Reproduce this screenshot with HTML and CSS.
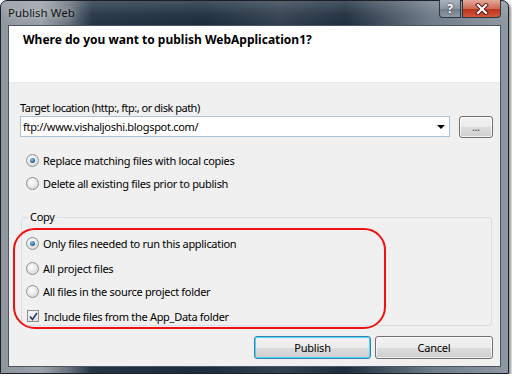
FILE: index.html
```html
<!DOCTYPE html>
<html lang="en">
<head>
    <meta charset="UTF-8">
    <meta name="viewport" content="width=device-width, initial-scale=1.0">
    <title>Publish Web</title>
    <link rel="stylesheet" href="styles.css">
</head>
<body>
    <div class="window">
        <div class="titlebar">
            <span class="title">Publish Web</span>
            <div class="caption-buttons">
                <span class="cap-btn help">?</span>
                <span class="cap-btn close">
                    <svg width="14" height="12" viewBox="0 0 14 12">
                        <path d="M3 2 L11 10 M11 2 L3 10" stroke="#5a1010" stroke-width="4" stroke-linecap="square"/>
                        <path d="M3 2 L11 10 M11 2 L3 10" stroke="#fff" stroke-width="2.2" stroke-linecap="square"/>
                    </svg>
                </span>
            </div>
        </div>
        <div class="client">
            <div class="header">
                <h1>Where do you want to publish WebApplication1?</h1>
            </div>
            <div class="content">
                <label class="field-label" for="location">Target location (http:, ftp:, or disk path)</label>
                <div class="location-row">
                    <div class="combo" id="location">
                        <span>ftp://www.vishaljoshi.blogspot.com/</span>
                        <span class="arrow"></span>
                    </div>
                    <button class="btn browse">...</button>
                </div>
                <div class="option first"><span class="radio checked"></span>Replace matching files with local copies</div>
                <div class="option second"><span class="radio"></span>Delete all existing files prior to publish</div>
                <fieldset class="group">
                    <legend>Copy</legend>
                    <div class="option g1"><span class="radio checked"></span>Only files needed to run this application</div>
                    <div class="option g2"><span class="radio"></span>All project files</div>
                    <div class="option g3"><span class="radio"></span>All files in the source project folder</div>
                    <div class="option g4">
                        <span class="checkbox">
                            <svg width="9" height="9" viewBox="0 0 9 9">
                                <path d="M1 4.5 L3.5 7.5 L8 1" fill="none" stroke="#1f3a66" stroke-width="1.6"/>
                            </svg>
                        </span>Include files from the App_Data folder
                    </div>
                </fieldset>
                <div class="actions">
                    <button class="btn primary">Publish</button>
                    <button class="btn cancel">Cancel</button>
                </div>
                <!-- red annotation drawn over the copy options -->
                <div class="highlight"></div>
            </div>
        </div>
    </div>
</body>
</html>
```

FILE: styles.css
```css
body {
    margin: 0;
    background-color: #fff;
    font-family: "Noto Sans", "Open Sans", sans-serif;
    font-size: 11px;
    letter-spacing: -0.3px;
    color: #000;
}
.window {
    width: 509px;
    height: 374px;
    box-sizing: border-box;
    padding: 0 7px 6px;
    display: flex;
    flex-direction: column;
    border: 1px solid #1b2028;
    border-radius: 7px 7px 0 0;
    background:
        linear-gradient(180deg, rgba(255,255,255,0.18) 0, rgba(255,255,255,0.04) 14px, rgba(0,0,0,0) 24px),
        linear-gradient(90deg, #8f969e 0, #9aa1a8 8%, #6d7681 13%, #243445 18%, #1c2c3d 40%, #32404f 55%, #1f2e3e 68%, #6e7b88 85%, #8e98a2 100%);
    box-shadow: 2px 2px 3px rgba(0, 0, 0, 0.45);
}
.titlebar {
    height: 24px;
    display: flex;
    justify-content: space-between;
    align-items: flex-start;
}
.title {
    margin-top: 4px;
    font-size: 11.5px;
    letter-spacing: 0;
    color: #111;
    text-shadow: 0 0 6px rgba(255, 255, 255, 0.7);
}
.caption-buttons {
    display: flex;
    gap: 1px;
    margin-top: -1px;
}
.cap-btn {
    height: 18px;
    display: flex;
    align-items: center;
    justify-content: center;
    border: 1px solid #2d3640;
    border-top: none;
    box-sizing: border-box;
}
.help {
    width: 22px;
    border-radius: 0 0 0 4px;
    background: linear-gradient(180deg, #a9b3bd 0, #8a96a2 50%, #6e7a86 51%, #8d99a4 100%);
    color: #fff;
    font-weight: bold;
    font-size: 12px;
    text-shadow: 0 0 2px #222;
}
.close {
    width: 39px;
    border-radius: 0 0 4px 0;
    background: linear-gradient(180deg, #e5a89a 0, #cf6a55 50%, #b9321b 51%, #d2573c 100%);
}
.client {
    flex: 1;
    display: flex;
    flex-direction: column;
    border: 1px solid #4b5663;
    background-color: #f0f0f0;
}
.header {
    height: 57px;
    background-color: #fff;
    border-bottom: 1px solid #ececec;
    box-sizing: border-box;
}
h1 {
    margin: 6px 0 0 14px;
    font-size: 12px;
    letter-spacing: 0;
    line-height: 16px;
    font-weight: bold;
}
.content {
    position: relative;
    flex: 1;
    display: flex;
    flex-direction: column;
    padding: 0 7px 0 11px;
}
.field-label {
    margin-top: 17px;
    line-height: 16px;
    letter-spacing: -0.5px;
}
.location-row {
    display: flex;
    align-items: flex-start;
    height: 22px;
}
.combo {
    width: 430px;
    height: 21px;
    box-sizing: border-box;
    border: 1px solid #a7c4dc;
    background-color: #fff;
    display: flex;
    align-items: center;
    justify-content: space-between;
    padding: 0 4px 0 2px;
}
.arrow {
    width: 0;
    height: 0;
    border-left: 4px solid transparent;
    border-right: 4px solid transparent;
    border-top: 4px solid #000;
}
.btn {
    font-family: inherit;
    font-size: 11px;
    letter-spacing: -0.2px;
    color: #000;
    padding: 0;
    box-sizing: border-box;
    border: 1px solid #707070;
    border-radius: 3px;
    background: linear-gradient(180deg, #f2f2f2 0, #ebebeb 50%, #dddddd 51%, #cfcfcf 100%);
    box-shadow: inset 0 0 0 1px rgba(255, 255, 255, 0.7);
}
.browse {
    width: 34px;
    height: 22px;
    margin-left: 9px;
    line-height: 12px;
    font-size: 10px;
    color: #333;
}
.option {
    display: flex;
    align-items: center;
    height: 18px;
    margin-left: 6px;
}
.option.first { margin-top: 13px; }
.option.second { margin-top: 5px; }
.radio {
    width: 13px;
    height: 13px;
    box-sizing: border-box;
    border-radius: 50%;
    border: 1px solid #8e8f8f;
    background: radial-gradient(circle at 40% 35%, #ffffff 0, #e8e8e8 50%, #cfcfcf 100%);
    margin-right: 4px;
    display: flex;
    align-items: center;
    justify-content: center;
}
.radio.checked::after {
    content: "";
    width: 5px;
    height: 5px;
    border-radius: 50%;
    background: radial-gradient(circle at 40% 35%, #7fc3ef 0, #2b6aa6 60%, #163e6c 100%);
}
.checkbox {
    width: 12px;
    height: 12px;
    box-sizing: border-box;
    border: 1px solid #8e8f8f;
    background: linear-gradient(180deg, #f6f6f6, #e2e2e2);
    margin-right: 5px;
    display: flex;
    align-items: center;
    justify-content: center;
}
.group {
    margin: 17px 0 0 1px;
    padding: 0;
    width: 471px;
    box-sizing: border-box;
    border: 1px solid #d5dfe5;
    border-radius: 3px;
}
.group legend {
    margin-left: 6px;
    padding: 0 2px;
    line-height: 16px;
}
.group .option { margin-left: 4px; }
.option.g1 { margin-top: 9px; }
.option.g2 { margin-top: 7px; }
.option.g3 { margin-top: 5px; }
.option.g4 { margin-top: 7px; margin-left: 5px; }
.actions {
    display: flex;
    justify-content: flex-end;
    gap: 4px;
    margin-top: 10px;
}
.actions .btn {
    height: 23px;
}
.primary {
    width: 117px;
    border-color: #3c7fb1;
    box-shadow: inset 0 0 0 1px #48d8fb;
}
.cancel {
    width: 118px;
}
.highlight {
    position: absolute;
    left: 4px;
    top: 145px;
    width: 373px;
    height: 101px;
    box-sizing: border-box;
    border: 2px solid #f01010;
    border-radius: 22px;
}
```
